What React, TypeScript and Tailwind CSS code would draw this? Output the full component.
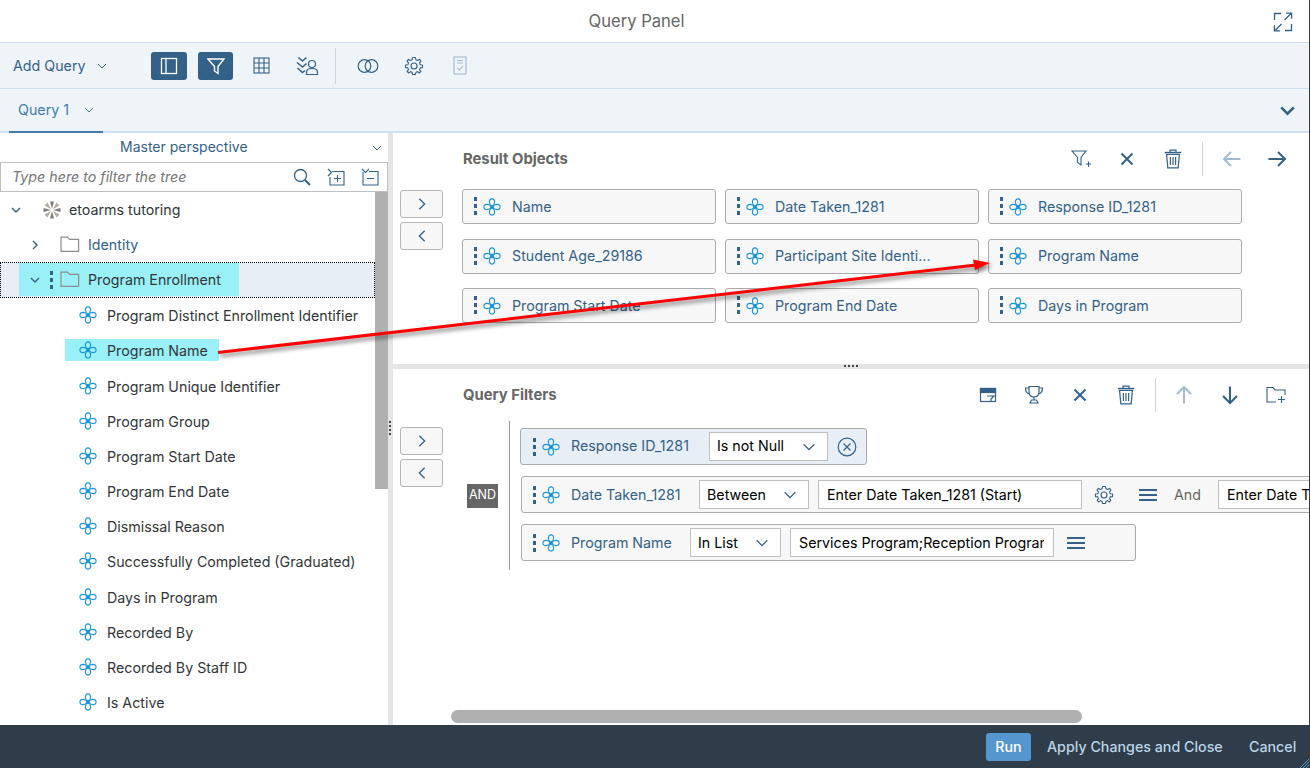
import React from "react";

const BLUE = "#346187";

function Chev({ dir = "down", size = 12, color = BLUE, sw = 1 }: { dir?: "down" | "right" | "left"; size?: number; color?: string; sw?: number }) {
  const pts = dir === "down" ? "2,4 6,8 10,4" : dir === "right" ? "4,2 8,6 4,10" : "8,2 4,6 8,10";
  return (
    <svg width={size} height={size} viewBox="0 0 12 12" fill="none" stroke={color} strokeWidth={sw} className="shrink-0">
      <polyline points={pts} />
    </svg>
  );
}

function Flower() {
  const petal = "M9 9C5.6 6.6 5.4 0.9 9 0.9S12.4 6.6 9 9Z";
  return (
    <svg width="18" height="18" viewBox="0 0 18 18" fill="none" stroke="#1593d6" strokeWidth="1.1" className="shrink-0">
      <path d={petal} />
      <path d={petal} transform="rotate(90 9 9)" />
      <path d={petal} transform="rotate(180 9 9)" />
      <path d={petal} transform="rotate(270 9 9)" />
      <path d="M9 6.8V11.2M6.8 9H11.2M7.4 7.4L10.6 10.6M10.6 7.4L7.4 10.6" strokeWidth="1.1" />
    </svg>
  );
}

function Grip() {
  return (
    <div className="flex flex-col gap-[3px] w-[3px] shrink-0">
      <div className="w-[3px] h-[4px] bg-[#346187]" />
      <div className="w-[3px] h-[4px] bg-[#346187]" />
      <div className="w-[3px] h-[4px] bg-[#346187]" />
    </div>
  );
}

function Folder() {
  return (
    <svg width="20" height="17" viewBox="0 0 20 17" fill="none" stroke="#8c8c8c" strokeWidth="1.2" className="shrink-0">
      <path d="M1 15.4V1.2H7.5L9.5 3.4H18.6V15.4Z" />
    </svg>
  );
}

function Star() {
  return (
    <svg width="20" height="20" viewBox="0 0 20 20" className="shrink-0">
      {[0, 45, 90, 135, 180, 225, 270, 315].map((a) => (
        <path key={a} d="M10 8.8L8 1.5H12Z" transform={`rotate(${a} 10 10)`} fill={a % 90 === 0 ? "#7d7d7d" : "#b5ad9f"} />
      ))}
    </svg>
  );
}

function Gear({ color = BLUE }: { color?: string }) {
  return (
    <svg width="20" height="20" viewBox="0 0 20 20" fill="none" stroke={color} strokeWidth="1.1" className="shrink-0">
      <circle cx="10" cy="10" r="3" />
      <path d="M8.6 1.5H11.4L11.9 3.7L13.7 4.5L15.7 3.3L17 5.2L15.5 6.9L16.2 8.8L18.5 9V11.6L16.2 11.9L15.5 13.6L16.9 15.3L15.3 17L13.6 15.6L11.9 16.4L11.4 18.5H8.6L8.1 16.4L6.4 15.6L4.7 17L3.1 15.3L4.5 13.6L3.8 11.9L1.5 11.6V9L3.8 8.8L4.5 6.9L3 5.2L4.3 3.3L6.3 4.5L8.1 3.7Z" strokeLinejoin="round" />
    </svg>
  );
}

function Trash() {
  return (
    <svg width="20" height="20" viewBox="0 0 20 20" fill="none" stroke={BLUE} strokeWidth="1.2" className="shrink-0">
      <path d="M1.8 3.6H18.2" strokeWidth="1.6" />
      <path d="M7 3.2V1.2H13V3.2" />
      <path d="M3.6 5.5H16.4L15.2 18.8H4.8Z" />
      <path d="M7.4 8V16M10 8V16M12.6 8V16" />
    </svg>
  );
}

function XIcon() {
  return (
    <svg width="14" height="14" viewBox="0 0 14 14" fill="none" stroke={BLUE} strokeWidth="2" className="shrink-0">
      <path d="M1.5 1.5L12.5 12.5M12.5 1.5L1.5 12.5" />
    </svg>
  );
}

function Arrow({ dir, color = BLUE }: { dir: "left" | "right" | "up" | "down"; color?: string }) {
  const rot = { right: 0, left: 180, down: 90, up: 270 }[dir];
  return (
    <svg width="20" height="20" viewBox="0 0 20 20" fill="none" stroke={color} strokeWidth="2" className="shrink-0" style={{ transform: `rotate(${rot}deg)` }}>
      <path d="M1.5 10H18M11 3L18 10L11 17" />
    </svg>
  );
}

function Menu() {
  return (
    <svg width="18" height="14" viewBox="0 0 18 14" fill="none" stroke={BLUE} strokeWidth="2" className="shrink-0">
      <path d="M0 2H18M0 7H18M0 12H18" />
    </svg>
  );
}

function Sep({ className }: { className: string }) {
  return <div className={`w-px bg-[#cdd5dc] shrink-0 ${className}`} />;
}

function Chip({ label }: { label: string }) {
  return (
    <div className="h-[35px] bg-[#f7f7f7] border border-[#ababab] rounded-[3px] flex items-center pl-[11px] min-w-0">
      <div className="-mt-[1px]"><Grip /></div>
      <div className="ml-[6px]"><Flower /></div>
      <span className="ml-[11px] text-[14.25px] leading-[22px] text-[#346187] truncate pr-2">{label}</span>
    </div>
  );
}

function MoveButtons({ className }: { className: string }) {
  return (
    <div className={`w-[43px] flex flex-col gap-[4px] shrink-0 ${className}`}>
      <button className="h-[28px] bg-[#f7f7f7] border border-[#b5b5b5] rounded-[3px] flex items-center justify-center">
        <Chev dir="right" size={16} />
      </button>
      <button className="h-[28px] bg-[#f7f7f7] border border-[#b5b5b5] rounded-[3px] flex items-center justify-center">
        <Chev dir="left" size={16} />
      </button>
    </div>
  );
}

function SelectBox({ label, w, up }: { label: string; w: string; up?: boolean }) {
  return (
    <div className={`h-[29px] bg-white border border-[#bfbfbf] flex items-center justify-between pl-[7px] pr-[10px] shrink-0 text-[14.25px] text-black ${w}`}>
      <span className={up ? "pb-[2px]" : ""}>{label}</span>
      <Chev size={16} />
    </div>
  );
}

function InputBox({ label, w }: { label: string; w: string }) {
  return (
    <div className={`h-[29px] bg-white border border-[#bfbfbf] flex items-center pl-[8px] pr-[9px] shrink-0 text-[14.25px] text-black ${w}`}>
      <div className="overflow-hidden whitespace-nowrap w-full">{label}</div>
    </div>
  );
}

function TreeField({ label, hl }: { label: string; hl?: boolean }) {
  return (
    <div className="h-[35.2px] flex items-center shrink-0">
      <div className={`flex items-center pl-[14px] ml-[65px] ${hl ? "bg-[#99f1f7] w-[154px] h-[22px]" : ""}`}>
        <Flower />
        <span className="ml-[10px] mt-[2px] text-[14.25px] leading-[22px] text-[#32363a] whitespace-nowrap">{label}</span>
      </div>
    </div>
  );
}

const fields = ["Program Start Date", "Program End Date", "Dismissal Reason", "Successfully Completed (Graduated)", "Days in Program", "Recorded By", "Recorded By Staff ID", "Is Active"];

export default function App() {
  return (
    <div className="relative w-[1310px] h-[768px] overflow-hidden bg-white flex flex-col border-r border-[#3a3a3a] font-['Inter',sans-serif]">
      {/* title */}
      <header className="h-[43px] shrink-0 bg-white border-b border-[#cfdfee] flex items-center pr-[36px]">
        <div className="flex-1 text-center text-[16.6px] text-[#666666]">Query Panel</div>
        <svg width="20" height="20" viewBox="0 0 20 20" fill="none" stroke={BLUE} strokeWidth="1.3" className="absolute right-[16px] top-[12px]">
          <path d="M1.5 8V1.5H8M18.5 12V18.5H12" />
          <path d="M11.5 8L18 1.5M13 1.2H18.6V6.8M8.5 12L2 18.5M7 18.8H1.4V13.2" />
        </svg>
      </header>

      {/* toolbar */}
      <div className="h-[46px] shrink-0 bg-[#eff4f9] border-b border-[#cfdfee] flex items-center">
        <span className="ml-[13px] w-[73px] whitespace-nowrap text-[14.25px] text-[#346187]">Add Query</span>
        <div className="ml-[10px]"><Chev /></div>
        <button className="ml-[43px] w-[36px] h-[28px] rounded-[3px] bg-[#346187] flex items-center justify-center">
          <svg width="18" height="18" viewBox="0 0 18 18" fill="none" stroke="#fff" strokeWidth="1.3"><rect x="1.5" y="1.5" width="15" height="15" /><path d="M6 1.5V16.5" /></svg>
        </button>
        <button className="ml-[11px] w-[35px] h-[28px] rounded-[3px] bg-[#346187] flex items-center justify-center">
          <svg width="18" height="18" viewBox="0 0 18 18" fill="none" stroke="#fff" strokeWidth="1.4"><path d="M1 2H17L11 9.5V16.5L7.5 14V9.5Z" /></svg>
        </button>
        <svg className="ml-[20px]" width="17" height="17" viewBox="0 0 17 17" fill="none" stroke={BLUE} strokeWidth="1.1"><rect x="1" y="1" width="15" height="15" /><path d="M1 6H16M1 11H16M6 1V16M11 1V16" /></svg>
        <svg className="ml-[26px]" width="24" height="20" viewBox="0 0 24 20" fill="none" stroke={BLUE} strokeWidth="1.6">
          <path d="M2.5 1.5L6.5 5L10.5 1.5M1 6.5L6.5 11L10.5 7.5M1.5 12L6.5 16.5L9 14.5" />
          <circle cx="16" cy="8" r="3.5" strokeWidth="1.2" />
          <path d="M10.5 18.5V16C10.5 13.5 13 12.5 16 12.5S21.5 13.5 21.5 16V18.5Z" strokeWidth="1.2" />
        </svg>
        <Sep className="ml-[15px] h-[36px]" />
        <svg className="ml-[21px]" width="22" height="14" viewBox="0 0 22 14" fill="none" stroke={BLUE} strokeWidth="1.2"><circle cx="7.5" cy="7" r="6.3" /><circle cx="14.5" cy="7" r="6.3" /></svg>
        <div className="ml-[25px]"><Gear /></div>
        <svg className="ml-[29px]" width="14" height="19" viewBox="0 0 14 19" fill="none" stroke="#a3bbd0" strokeWidth="1.1"><rect x="1" y="1" width="12" height="17" /><path d="M4 4.5H10M4 7H10M4.5 12L6.5 14L10 10" /></svg>
      </div>

      {/* tabs */}
      <div className="h-[44px] shrink-0 bg-[#eff4f9] border-b-2 border-[#d1e0ee] flex items-center relative">
        <div className="ml-[9px] w-[94px] h-[44px] -mb-[2px] border-b-2 border-[#427cac] flex items-center pl-[9px] pb-[1px]">
          <span className="w-[55px] whitespace-nowrap text-[14.25px] text-[#427cac]">Query 1</span>
          <div className="ml-[10px]"><Chev color="#427cac" /></div>
        </div>
        <div className="ml-auto mr-[12px]"><Chev size={19} sw={1.6} /></div>
      </div>

      {/* main */}
      <div className="flex-1 flex min-h-0">
        {/* left panel */}
        <aside className="w-[388px] shrink-0 flex flex-col">
          <div className="h-[29px] shrink-0 flex items-center pl-[120px] pr-[5px] justify-between">
            <span className="text-[14px] text-[#346187] pb-[2px]">Master perspective</span>
            <Chev />
          </div>
          <div className="h-[30px] shrink-0 border border-[#bfbfbf] flex items-center pl-[11px] pr-[7px]">
            <span className="text-[14.25px] leading-[22px] italic text-[#757575]">Type here to filter the tree</span>
            <svg className="ml-auto" width="18" height="18" viewBox="0 0 18 18" fill="none" stroke={BLUE} strokeWidth="1.3"><circle cx="7.5" cy="7.5" r="6" /><path d="M12 12L17 17" strokeWidth="2" /></svg>
            <svg className="ml-[16px]" width="18" height="18" viewBox="0 0 18 18" fill="none" stroke={BLUE} strokeWidth="1.1"><path d="M5 3.5H17V17H3V9M1 1L4.5 4.5L1 8M7 10.5H14M10.5 7V14" /></svg>
            <svg className="ml-[16px] mr-[1px]" width="18" height="18" viewBox="0 0 18 18" fill="none" stroke={BLUE} strokeWidth="1.1"><path d="M8 3.5H17V17H2V4M1 1L4.5 4.5L8 1M6 10.5H13" /></svg>
          </div>
          <div className="flex-1 flex min-h-0">
            <div className="flex-1 flex flex-col overflow-hidden">
              <div className="h-[35.2px] flex items-center shrink-0 pl-[10px]">
                <Chev size={12} sw={1.4} />
                <div className="ml-[20px]"><Star /></div>
                <span className="ml-[7px] text-[14.25px] leading-[22px] text-[#32363a]">etoarms tutoring</span>
              </div>
              <div className="h-[35.2px] flex items-center shrink-0 pl-[29px]">
                <Chev dir="right" size={12} sw={1.4} />
                <div className="ml-[19px]"><Folder /></div>
                <span className="ml-[8px] text-[14.25px] leading-[22px] text-[#346187]">Identity</span>
              </div>
              <div className="h-[35.2px] flex items-center shrink-0 bg-[#e7eef6] outline-1 outline-dotted outline-black -outline-offset-1">
                <div className="ml-[19px] w-[220px] h-[33px] bg-[#99f1f7] flex items-center pl-[10px]">
                  <Chev size={12} sw={1.4} />
                  <div className="ml-[9px]"><Grip /></div>
                  <div className="ml-[7px]"><Folder /></div>
                  <span className="ml-[8px] text-[14.25px] leading-[22px] text-[#32363a]">Program Enrollment</span>
                </div>
              </div>
              <TreeField label="Program Distinct Enrollment Identifier" />
              <TreeField label="Program Name" hl />
              <TreeField label="Program Unique Identifier" />
              <TreeField label="Program Group" />
              {fields.map((f) => <TreeField key={f} label={f} />)}
            </div>
            <div className="w-[13px] shrink-0">
              <div className="h-[297px] bg-[#b0b0b0]" />
            </div>
          </div>
        </aside>

        {/* vertical sash */}
        <div className="w-[5px] shrink-0 bg-[#e5e5e5] flex flex-col items-start gap-[2px] pt-[288px]">
          <div className="w-[2px] h-[2px] bg-[#444] ml-[1px]" />
          <div className="w-[2px] h-[2px] bg-[#444] ml-[1px]" />
          <div className="w-[2px] h-[2px] bg-[#444] ml-[1px]" />
          <div className="w-[2px] h-[2px] bg-[#444] ml-[1px]" />
        </div>

        {/* right panel */}
        <div className="flex-1 flex flex-col min-w-0">
          <section className="h-[231px] shrink-0 flex">
            <MoveButtons className="ml-[7px] mt-[57px]" />
            <div className="ml-[19px] flex-1 min-w-0">
              <div className="h-[52px] mb-[4px] flex items-center pr-[22px]">
                <span className="ml-[1px] text-[14.8px] leading-[22px] font-bold text-[#666666]">Result Objects</span>
                <svg className="ml-auto" width="20" height="20" viewBox="0 0 20 20" fill="none" stroke={BLUE} strokeWidth="1.1"><path d="M1 2H15L10 8.5V16L6.5 13.5V8.5Z" /><path d="M15 15H20M17.5 12.5V18" /></svg>
                <div className="ml-[29px]"><XIcon /></div>
                <div className="ml-[29px]"><Trash /></div>
                <Sep className="ml-[19px] h-[34px]" />
                <div className="ml-[19px]"><Arrow dir="left" color="#a3bbd0" /></div>
                <div className="ml-[25px]"><Arrow dir="right" /></div>
              </div>
              <div className="grid grid-cols-[254px_254px_254px] gap-x-[9px] gap-y-[14.6px]">
                {["Name", "Date Taken_1281", "Response ID_1281", "Student Age_29186", "Participant Site Identi...", "Program Name", "Program Start Date", "Program End Date", "Days in Program"].map((c) => (
                  <Chip key={c} label={c} />
                ))}
              </div>
            </div>
          </section>

          {/* horizontal sash */}
          <div className="h-[5px] shrink-0 bg-[#e5e5e5] flex justify-center items-start gap-[2px]">
            <div className="w-[2px] h-[2px] bg-[#444] mt-[1px]" />
            <div className="w-[2px] h-[2px] bg-[#444] mt-[1px]" />
            <div className="w-[2px] h-[2px] bg-[#444] mt-[1px]" />
            <div className="w-[2px] h-[2px] bg-[#444] mt-[1px]" />
          </div>

          <section className="flex-1 flex flex-col min-h-0 overflow-hidden">
            <div className="flex-1 flex min-h-0">
              <MoveButtons className="ml-[7px] mt-[58px]" />
              <div className="ml-[19px] flex-1 min-w-0 flex flex-col">
                <div className="h-[52px] shrink-0 flex items-center pr-[23px]">
                  <span className="ml-[1px] text-[14.8px] leading-[22px] font-bold text-[#666666]">Query Filters</span>
                  <svg className="ml-auto" width="18" height="18" viewBox="0 0 18 18" fill="none" stroke={BLUE} strokeWidth="1.2"><rect x="1.5" y="2.5" width="15" height="13" /><rect x="1.5" y="2.5" width="15" height="4" fill={BLUE} /><path d="M8 10H15L12 13V15" /></svg>
                  <svg className="ml-[27px]" width="20" height="20" viewBox="0 0 20 20" fill="none" stroke={BLUE} strokeWidth="1.2"><path d="M5 1.5H15V7C15 10.5 12.5 12 10 12S5 10.5 5 7Z" /><path d="M5 3H1.5C1.5 7 3 8.5 5.5 9M15 3H18.5C18.5 7 17 8.5 14.5 9M10 12V15M6 18H14L12.5 15H7.5Z" /></svg>
                  <div className="ml-[29px]"><XIcon /></div>
                  <div className="ml-[29px]"><Trash /></div>
                  <Sep className="ml-[19px] h-[34px] w-[2px]" />
                  <div className="ml-[18px]"><Arrow dir="up" color="#a3bbd0" /></div>
                  <div className="ml-[26px]"><Arrow dir="down" /></div>
                  <svg className="ml-[26px]" width="20" height="18" viewBox="0 0 20 18" fill="none" stroke={BLUE} strokeWidth="1.1"><path d="M10 16H1V1.5H7L9 4H19V9" /><path d="M12 13.5H19M15.5 10V17" /></svg>
                </div>
                <div className="flex -mr-[100px]">
                  <div className="w-[47px] shrink-0 flex items-center">
                    <div className="ml-[5px] w-[31px] h-[24px] bg-[#666666] text-white text-[12.5px] flex items-center justify-center">AND</div>
                  </div>
                  <div className="w-px h-[149px] bg-[#9a9a9a] shrink-0" />
                  <div className="ml-[10px] flex flex-col gap-[11px] pt-[7px] flex-1 min-w-0">
                    <div className="h-[37px] w-[347px] bg-[#e7eef6] border border-[#ababab] rounded-[3px] flex items-center pl-[12px]">
                      <Grip />
                      <div className="ml-[6px]"><Flower /></div>
                      <span className="ml-[11px] text-[14.25px] text-[#346187] whitespace-nowrap pb-[2px]">Response ID_1281</span>
                      <div className="ml-auto"><SelectBox label="Is not Null" w="w-[119px]" up /></div>
                      <svg className="ml-[9px] mr-[9px]" width="20" height="20" viewBox="0 0 20 20" fill="none" stroke={BLUE} strokeWidth="1.2"><circle cx="10" cy="10" r="8.8" /><path d="M6.5 6.5L13.5 13.5M13.5 6.5L6.5 13.5" /></svg>
                    </div>
                    <div className="h-[37px] ml-[1px] w-[900px] bg-[#f7f7f7] border border-[#ababab] rounded-[3px] flex items-center pl-[11px]">
                      <Grip />
                      <div className="ml-[6px]"><Flower /></div>
                      <span className="ml-[11px] w-[128px] shrink-0 text-[14.25px] text-[#346187] whitespace-nowrap">Date Taken_1281</span>
                      <SelectBox label="Between" w="w-[110px]" />
                      <div className="ml-[9px]"><InputBox label="Enter Date Taken_1281 (Start)" w="w-[264px]" /></div>
                      <div className="ml-[12px]"><Gear /></div>
                      <div className="ml-[25px]"><Menu /></div>
                      <span className="ml-[17px] w-[27px] shrink-0 text-[14.25px] text-[#666666]">And</span>
                      <div className="ml-[17px]"><InputBox label="Enter Date Taken_1281 (End)" w="w-[264px]" /></div>
                    </div>
                    <div className="h-[37px] ml-[1px] w-[615px] bg-[#f7f7f7] border border-[#ababab] rounded-[3px] flex items-center pl-[11px]">
                      <Grip />
                      <div className="ml-[6px]"><Flower /></div>
                      <span className="ml-[11px] w-[119px] shrink-0 text-[14.25px] text-[#346187] whitespace-nowrap">Program Name</span>
                      <SelectBox label="In List" w="w-[91px]" />
                      <div className="ml-[9px]"><InputBox label="Services Program;Reception Program" w="w-[264px]" /></div>
                      <div className="ml-[13px]"><Menu /></div>
                    </div>
                  </div>
                </div>
              </div>
            </div>
            <div className="h-[15px] shrink-0">
              <div className="ml-[58px] w-[631px] h-[13px] rounded-[7px] bg-[#b0b0b0]" />
            </div>
          </section>
        </div>
      </div>

      {/* footer */}
      <footer className="h-[43px] shrink-0 bg-[#2f3c49] flex items-center justify-end pr-[12px] relative">
        <button className="w-[45px] h-[28px] rounded-[3px] bg-[#5496cd] text-white text-[14.25px] font-medium">Run</button>
        <span className="ml-[16px] w-[176px] whitespace-nowrap text-[14.25px] font-medium text-[#bcd4e8]">Apply Changes and Close</span>
        <span className="ml-[26px] w-[48px] whitespace-nowrap text-[14.25px] font-medium text-[#bcd4e8]">Cancel</span>
        <svg className="absolute right-0 bottom-0" width="9" height="9" viewBox="0 0 9 9" stroke="#5496cd" fill="none"><path d="M0 9L9 0M3 9L9 3M6 9L9 6" /></svg>
      </footer>

      {/* annotation arrow */}
      <svg className="absolute left-0 top-0 w-[1310px] h-[768px] pointer-events-none drop-shadow-[2px_3px_2px_rgba(0,0,0,0.5)]" viewBox="0 0 1310 768">
        <line x1="218" y1="352.5" x2="976" y2="265" stroke="#ff0000" strokeWidth="3" />
        <polygon points="990,263 973,259.5 975,270" fill="#ff0000" />
      </svg>
    </div>
  );
}
